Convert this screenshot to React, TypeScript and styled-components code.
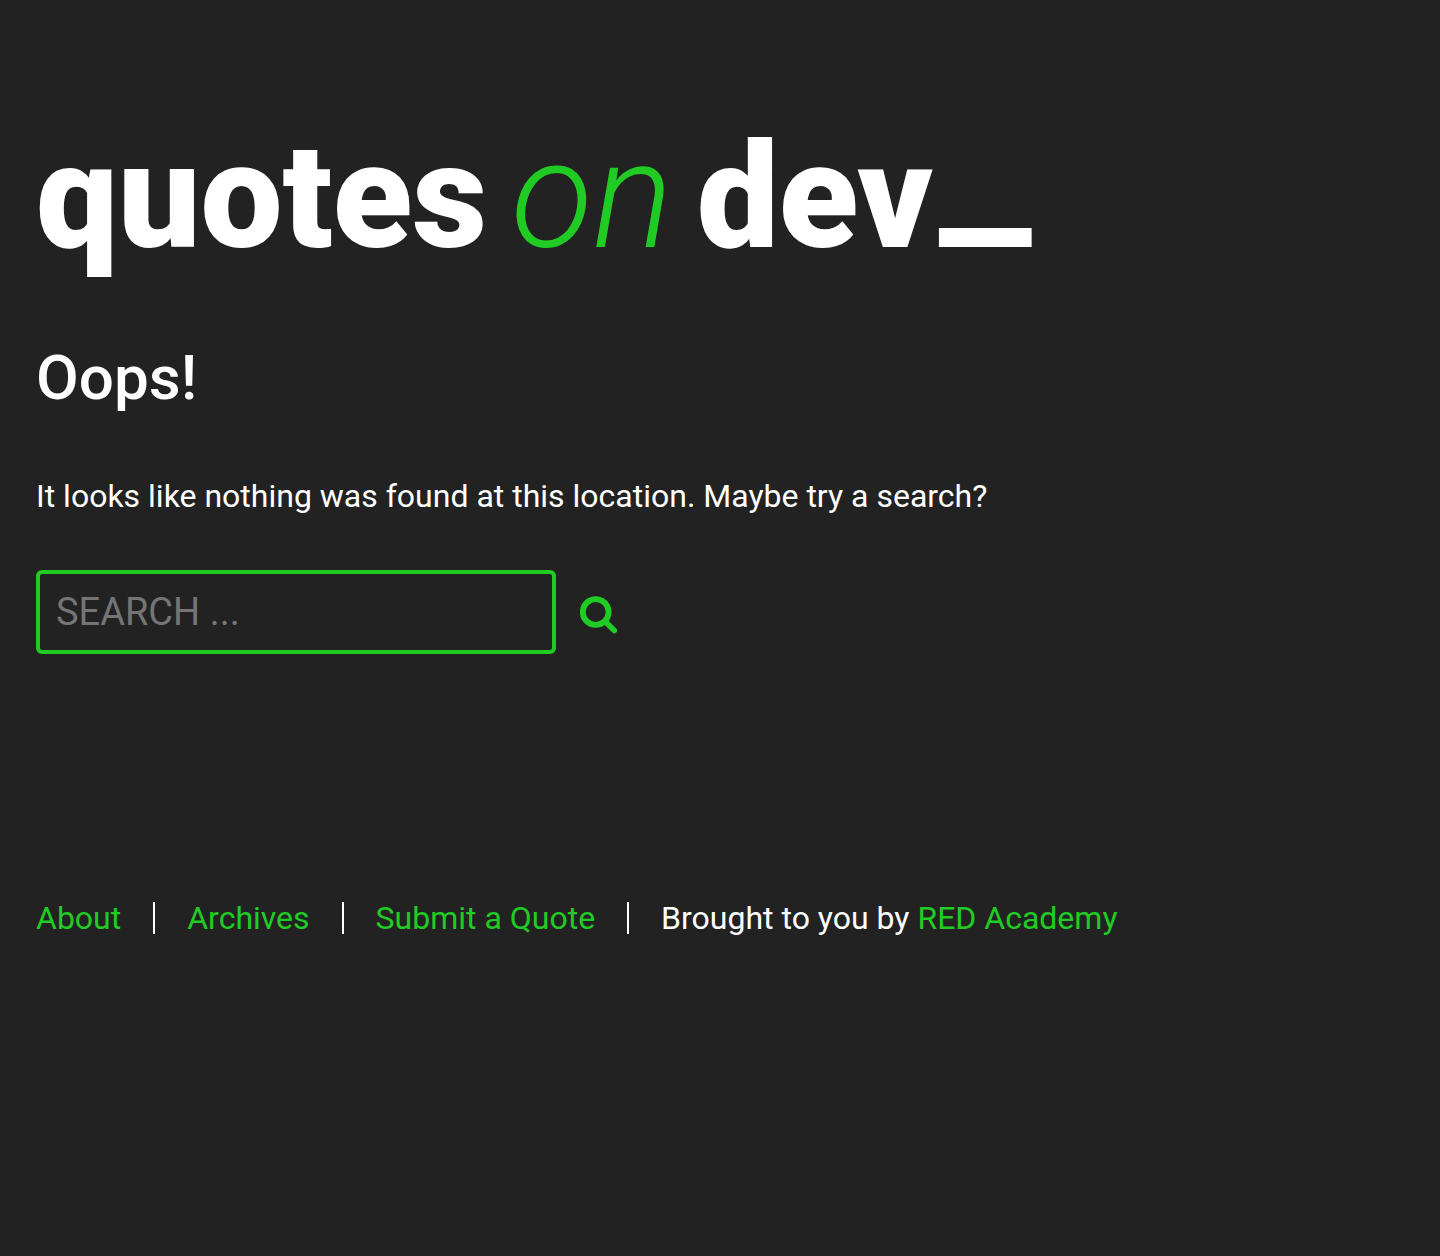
import React from 'react';
import styled, { createGlobalStyle, ThemeProvider } from 'styled-components';

const theme = {
  background: '#222222',
  text: '#ffffff',
  accent: '#20cc24',
  placeholder: '#757575',
};

const GlobalStyle = createGlobalStyle`
  *, *::before, *::after { box-sizing: border-box; }
  body {
    margin: 0;
    background: ${theme.background};
    color: ${theme.text};
    font: 400 32px/48px Roboto, "Open Sans", sans-serif;
  }
`;

const Page = styled.div`
  display: flex;
  flex-direction: column;
  padding: 116px 36px 64px;
`;

const SiteTitle = styled.h1`
  margin: 0 0 60px;
  font-size: 146px;
  font-weight: 900;
  line-height: 160px;
`;

const HomeLink = styled.a`
  display: inline-flex;
  flex-wrap: wrap;
  align-items: baseline;
  column-gap: 24px;
  color: inherit;
  text-decoration: none;
`;

const Accent = styled.em`
  color: ${({ theme }) => theme.accent};
  font-size: 150px;
  font-weight: 300;
`;

const Cursor = styled.span`
  margin-left: 6px;
  font-size: 208px;
  font-weight: 500;
  line-height: 0;
  vertical-align: 19px;
`;

const PageTitle = styled.h2`
  margin: 0 0 54px;
  font-size: 62px;
  font-weight: 500;
  line-height: 80px;
`;

const Message = styled.p`
  margin: 0 0 50px;
`;

const SearchForm = styled.form`
  display: flex;
  align-items: center;
  gap: 24px;
`;

const SearchField = styled.input`
  width: 520px;
  min-width: 0;
  height: 84px;
  padding: 0 16px;
  border: 4px solid ${({ theme }) => theme.accent};
  border-radius: 6px;
  outline: none;
  background: transparent;
  color: ${({ theme }) => theme.text};
  font: inherit;
  font-size: 38px;
  text-transform: uppercase;

  &::placeholder {
    color: ${({ theme }) => theme.placeholder};
    opacity: 1;
  }
`;

const SearchButton = styled.button`
  display: flex;
  padding: 6px 0 0;
  border: 0;
  background: none;
  color: ${({ theme }) => theme.accent};
  cursor: pointer;
`;

const Footer = styled.footer`
  margin-top: 248px;
`;

const FooterList = styled.ul`
  display: flex;
  flex-wrap: wrap;
  row-gap: 16px;
  margin: 0;
  padding: 0;
  list-style: none;
  line-height: 32px;
`;

const FooterItem = styled.li`
  & + & {
    margin-left: 32px;
  }

  &:not(:last-child) {
    padding-right: 32px;
    border-right: 2px solid ${({ theme }) => theme.text};
  }
`;

const FooterLink = styled.a`
  color: ${({ theme }) => theme.accent};
  text-decoration: none;
`;

const SearchIcon = () => (
  <svg width="38" height="38" viewBox="0 0 38 38" fill="none" stroke="currentColor" aria-hidden="true">
    <circle cx="15.7" cy="16" r="12.9" strokeWidth="5.8" />
    <path d="M25.5 25.8 34.3 34.6" strokeWidth="5.6" strokeLinecap="round" />
  </svg>
);

const links = ['About', 'Archives', 'Submit a Quote'];

export default function App() {
  return (
    <ThemeProvider theme={theme}>
      <GlobalStyle />
      <Page>
        <header>
          <SiteTitle>
            <HomeLink href="#">
              <span>quotes</span>
              <Accent>on</Accent>
              <span>
                dev<Cursor>_</Cursor>
              </span>
            </HomeLink>
          </SiteTitle>
        </header>
        <main>
          <PageTitle>Oops!</PageTitle>
          <Message>It looks like nothing was found at this location. Maybe try a search?</Message>
          <SearchForm role="search" onSubmit={(event) => event.preventDefault()}>
            <SearchField type="search" aria-label="Search for" placeholder="Search ..." />
            <SearchButton type="submit" aria-label="Search">
              <SearchIcon />
            </SearchButton>
          </SearchForm>
        </main>
        <Footer>
          <FooterList>
            {links.map((label) => (
              <FooterItem key={label}>
                <FooterLink href="#">{label}</FooterLink>
              </FooterItem>
            ))}
            <FooterItem>
              Brought to you by <FooterLink href="#">RED Academy</FooterLink>
            </FooterItem>
          </FooterList>
        </Footer>
      </Page>
    </ThemeProvider>
  );
}
